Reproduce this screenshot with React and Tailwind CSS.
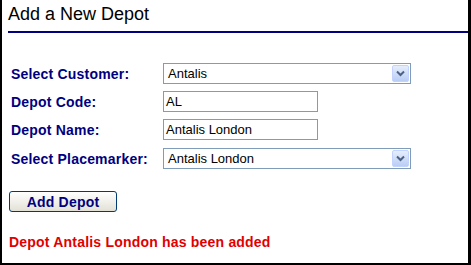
import React from "react";

function Chevron() {
  return (
    <svg width="9" height="7" viewBox="0 0 9 7" className="block">
      <path d="M1 1.5 L4.5 5 L8 1.5" fill="none" stroke="#4d6185" strokeWidth="2" />
    </svg>
  );
}

function Select({ value }) {
  return (
    <div className="w-[248px] h-[21px] border border-[#7f9db9] bg-white flex items-center justify-between pl-[4px] pr-[1px] box-border">
      <span className="text-[13px] leading-[15px] text-black">{value}</span>
      <div className="w-[17px] h-[17px] rounded-[2px] border border-[#c3d3fd] bg-gradient-to-b from-[#e6eefc] to-[#b9cdf6] flex items-center justify-center box-border">
        <Chevron />
      </div>
    </div>
  );
}

function TextInput({ value }) {
  return (
    <div className="w-[155px] h-[21px] border border-[#7f9db9] bg-white flex items-center pl-[2px] box-border">
      <span className="text-[13px] leading-[15px] text-black">{value}</span>
    </div>
  );
}

function Row({ label, children, className = "" }) {
  return (
    <div className={"flex items-center h-[21px] " + className}>
      <div className="w-[152px] text-[14px] leading-[16px] font-bold tracking-[0.2px] text-[#000080]">{label}</div>
      {children}
    </div>
  );
}

export default function App() {
  return (
    <div className="w-[471px] h-[265px] bg-white overflow-hidden font-['Liberation_Sans',Arial,sans-serif]">
      <div className="w-[471px] h-[265px] border-l-2 border-r-[3px] border-b-2 border-black box-border">
        <div className="pl-[6px] pt-[5px]">
          <h1 className="text-[18px] leading-[18px] text-black font-normal">Add a New Depot</h1>
        </div>
        <div className="ml-[6px] mt-[8px] h-[2px] bg-[#000080]" />
        <div className="pl-[9px] mt-[30px] flex flex-col">
          <Row label="Select Customer:">
            <Select value="Antalis" />
          </Row>
          <Row label="Depot Code:" className="mt-[7px]">
            <TextInput value="AL" />
          </Row>
          <Row label="Depot Name:" className="mt-[7px]">
            <TextInput value="Antalis London" />
          </Row>
          <Row label="Select Placemarker:" className="mt-[8px]">
            <Select value="Antalis London" />
          </Row>
        </div>
        <div className="pl-[7px] mt-[22px]">
          <button className="w-[108px] h-[21px] rounded-[3px] border border-[#003c74] bg-gradient-to-b from-white to-[#e3e1d6] text-[14px] leading-[16px] font-bold tracking-[0.2px] text-[#000080] flex items-center justify-center box-border">
            Add Depot
          </button>
        </div>
        <div className="pl-[7px] mt-[22px] text-[14px] leading-[16px] font-bold tracking-[0.2px] text-[#e00000]">
          Depot Antalis London has been added
        </div>
      </div>
    </div>
  );
}
